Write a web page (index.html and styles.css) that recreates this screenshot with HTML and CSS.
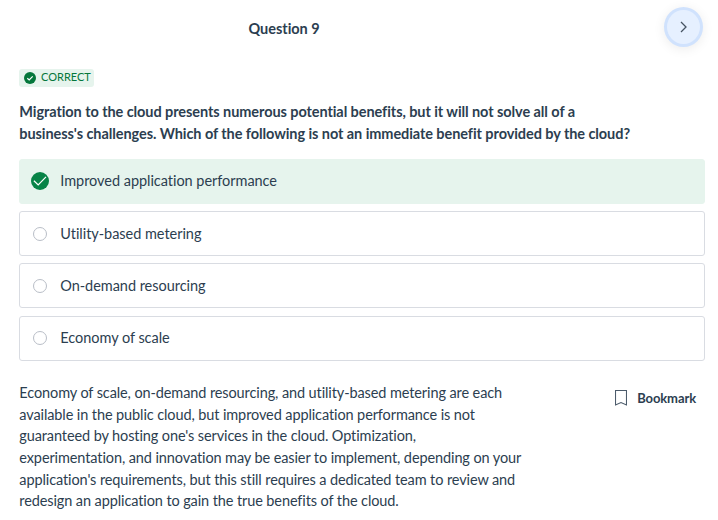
FILE: index.html
```html
<!DOCTYPE html>
<html lang="en">
<head>
<meta charset="utf-8">
<title>Question 9</title>
<link rel="stylesheet" href="styles.css">
</head>
<body>
<header class="top">
  <h1 class="title">Question 9</h1>
  <button class="next" aria-label="Next"><svg width="10" height="14" viewBox="0 0 10 14"><path d="M2 2 L7 7 L2 12" fill="none" stroke="#465362" stroke-width="1.3"/></svg></button>
</header>
<main class="content">
  <div class="badge"><svg width="12" height="12" viewBox="0 0 12 12"><circle cx="6" cy="6" r="6" fill="#04773b"/><path d="M3.3 6.2 L5.2 8 L8.7 4.3" fill="none" stroke="#fff" stroke-width="1.2"/></svg><span>CORRECT</span></div>
  <h2 class="question">Migration to the cloud presents numerous potential benefits, but it will not solve all of a business's challenges. Which of the following is not an immediate benefit provided by the cloud?</h2>
  <ul class="options">
    <li class="option correct"><svg class="check" width="18" height="18" viewBox="0 0 18 18"><circle cx="9" cy="9" r="9" fill="#078347"/><path d="M2.9 8.8 L7.2 13 L15 4.9" fill="none" stroke="#fff" stroke-width="1.2"/></svg><span>Improved application performance</span></li>
    <li class="option"><i class="radio"></i><span>Utility-based metering</span></li>
    <li class="option"><i class="radio"></i><span>On-demand resourcing</span></li>
    <li class="option"><i class="radio"></i><span>Economy of scale</span></li>
  </ul>
  <section class="footer">
    <p class="explanation">Economy of scale, on-demand resourcing, and utility-based metering are each available in the public cloud, but improved application performance is not guaranteed by hosting one's services in the cloud. Optimization, experimentation, and innovation may be easier to implement, depending on your application's requirements, but this still requires a dedicated team to review and redesign an application to gain the true benefits of the cloud.</p>
    <button class="bookmark"><svg width="12" height="16" viewBox="0 0 12 16"><path d="M.5 .5 H11.5 V15 L6 12.5 L.5 15 Z" fill="none" stroke="#4c5b6b" stroke-width="1.1"/></svg><span>Bookmark</span></button>
  </section>
</main>
</body>
</html>
```
FILE: styles.css
```css
* { box-sizing: border-box; }
body { margin: 0; height: 520px; overflow: hidden; background: #fff; color: #2c3e50; font-family: Lato, sans-serif; font-size: 14.5px; }
h1, h2, p, ul { margin: 0; padding: 0; }
button { border: 0; background: none; padding: 0; font: inherit; color: inherit; }
svg { display: block; flex: none; }
.top { display: flex; justify-content: space-between; padding: 7px 15px 0 248.5px; height: 69px; }
.title { font-size: 14.5px; line-height: 22px; margin-top: 11px; font-weight: 700; letter-spacing: -0.03px; }
.next { width: 39px; height: 40px; border-radius: 50%; border: 3px solid #d0e2fd; background: #e6f0ff; box-shadow: 0 2px 12px rgba(0, 0, 0, .08); display: flex; align-items: center; justify-content: center; }
.content { padding: 0 13px 0 19px; }
.badge { display: flex; align-items: center; gap: 5px; width: 75px; height: 18px; padding: 0 0 1px 5px; border-radius: 3px; background: #e6f4ed; color: #04773b; font-size: 11px; }
.badge span { line-height: 14px; padding-bottom: 2px; }
.question { margin-top: 14px; width: 616px; padding-left: .3px; font-size: 14.5px; line-height: 22px; font-weight: 700; letter-spacing: -0.075px; }
.options { list-style: none; margin-top: 14px; display: flex; flex-direction: column; gap: 7.2px; }
.option { height: 45px; border: 1px solid #d9dce2; border-radius: 3px; display: flex; align-items: center; gap: 13.3px; padding: 0 0 0 13px; letter-spacing: -0.04px; }
.option span { padding-bottom: 1px; }
.correct { background: #e6f4ed; border-color: #e6f4ed; gap: 11.3px; padding-left: 11px; }
.correct span { padding-bottom: 2px; }
.check { margin-bottom: 1px; }
.radio { width: 14px; height: 14px; border: 1px solid #b9bec7; border-radius: 50%; }
.footer { display: flex; justify-content: space-between; margin-top: 21.4px; }
.explanation { width: 504px; padding-left: .3px; line-height: 21.7px; letter-spacing: -0.105px; }
.bookmark { display: flex; align-items: center; gap: 10px; height: 20px; margin: 6px 9px 0 0; font-weight: 700; font-size: 13px; letter-spacing: -0.1px; }
```
